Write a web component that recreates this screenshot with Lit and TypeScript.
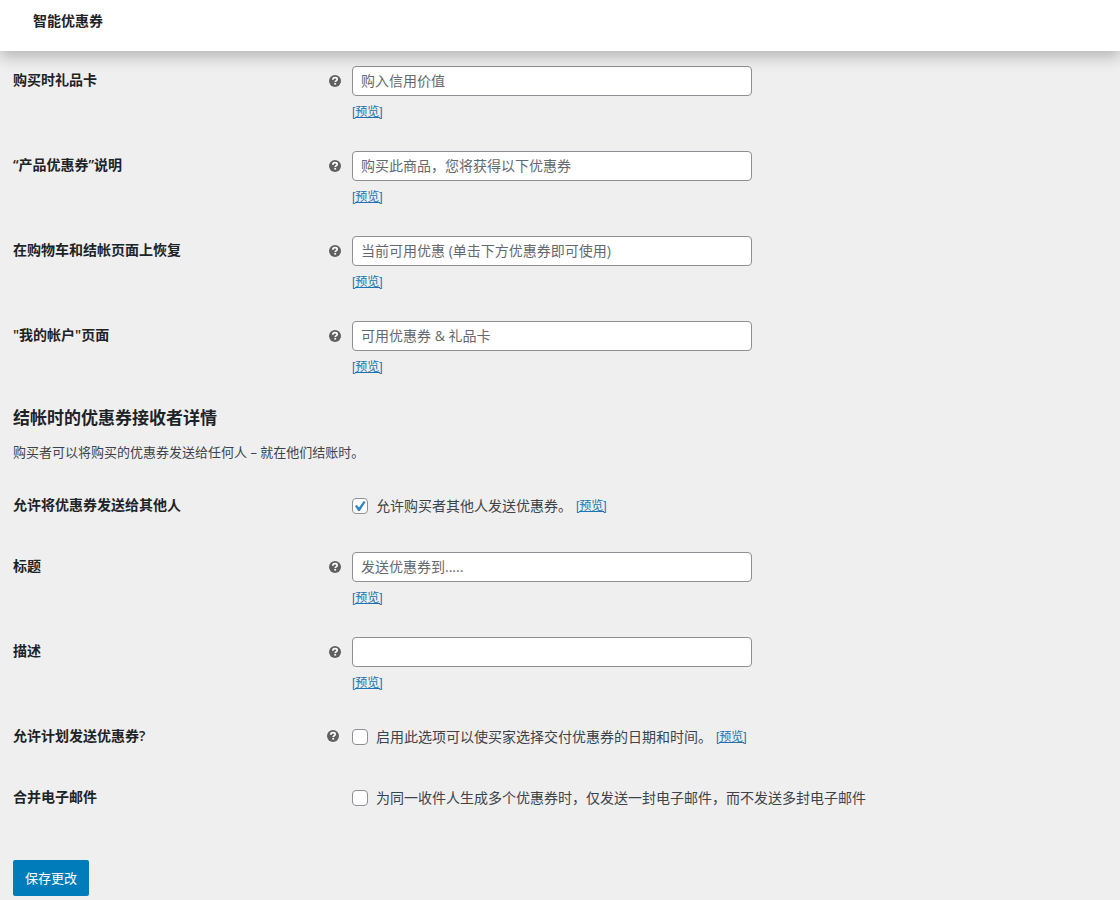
import { LitElement, html, css, nothing } from "lit";
import { customElement } from "lit/decorators.js";
import { classMap } from "lit/directives/class-map.js";

interface Field {
  id: string;
  label: string;
  kind: "text" | "check";
  text: string;
  help?: boolean;
  preview?: boolean;
  checked?: boolean;
}

const LABEL_FIELDS: Field[] = [
  { id: "gift", label: "购买时礼品卡", kind: "text", text: "购入信用价值", help: true, preview: true },
  { id: "product", label: "“产品优惠券”说明", kind: "text", text: "购买此商品，您将获得以下优惠券", help: true, preview: true },
  { id: "cart", label: "在购物车和结帐页面上恢复", kind: "text", text: "当前可用优惠 (单击下方优惠券即可使用)", help: true, preview: true },
  { id: "account", label: "\"我的帐户\"页面", kind: "text", text: "可用优惠券 & 礼品卡", help: true, preview: true },
];

const RECEIVER_FIELDS: Field[] = [
  { id: "allow", label: "允许将优惠券发送给其他人", kind: "check", text: "允许购买者其他人发送优惠券。", preview: true, checked: true },
  { id: "title", label: "标题", kind: "text", text: "发送优惠券到.....", help: true, preview: true },
  { id: "desc", label: "描述", kind: "text", text: "", help: true, preview: true },
  { id: "schedule", label: "允许计划发送优惠券?", kind: "check", text: "启用此选项可以使买家选择交付优惠券的日期和时间。", help: true, preview: true },
  { id: "combine", label: "合并电子邮件", kind: "check", text: "为同一收件人生成多个优惠券时，仅发送一封电子邮件，而不发送多封电子邮件" },
];

@customElement("app-root")
export class AppRoot extends LitElement {
  static styles = css`
    :host {
      display: block;
      min-height: 100vh;
      background: #efefef;
      color: #3c434a;
      font: 14px/20px "Open Sans", "Noto Sans CJK SC", sans-serif;
    }
    * {
      box-sizing: border-box;
    }
    .bar {
      position: relative;
      height: 51px;
      padding: 11px 33px;
      background: #fff;
      box-shadow: 0 6px 14px rgba(0, 0, 0, 0.24);
    }
    .bar-title {
      margin: 0;
      font-size: 14px;
      line-height: 20px;
      font-weight: 600;
      color: #1d2327;
    }
    .page {
      padding: 0 13px 4px;
    }
    .row {
      display: grid;
      grid-template-columns: 314px 1fr;
      min-height: 85px;
      padding-top: 15px;
    }
    .row.check {
      min-height: 61px;
    }
    .head {
      display: flex;
      align-items: center;
      height: 28px;
    }
    .name {
      font-weight: 600;
      color: #1d2327;
    }
    .content {
      display: grid;
      grid-template-columns: 16px minmax(0, 1fr);
      column-gap: 9px;
      align-content: start;
    }
    .row.check .content {
      grid-template-columns: 12px minmax(0, 1fr);
      column-gap: 13px;
    }
    .help {
      display: flex;
      align-items: center;
      justify-content: center;
      height: 30px;
    }
    .row.check .help {
      height: 28px;
    }
    .help svg {
      display: block;
      flex: none;
    }
    .value {
      display: flex;
      flex-direction: column;
      align-items: flex-start;
      gap: 6px;
    }
    .row.check .value {
      flex-direction: row;
      align-items: center;
      gap: 4px;
      height: 30px;
    }
    .text {
      width: 100%;
      max-width: 400px;
      height: 30px;
      padding: 0 8px 2px;
      border: 1px solid #8c8f94;
      border-radius: 4px;
      background: #fff;
      color: #2c3338;
      font: inherit;
    }
    .text::placeholder {
      color: #646970;
      opacity: 1;
    }
    .option {
      display: flex;
      align-items: center;
      gap: 8px;
    }
    .box {
      appearance: none;
      flex: none;
      width: 16px;
      height: 16px;
      margin: 0;
      border: 1px solid #8c8f94;
      border-radius: 4px;
      background: #fff;
    }
    .tick {
      display: grid;
      flex: none;
    }
    .tick > * {
      grid-area: 1 / 1;
    }
    .tick svg {
      pointer-events: none;
    }
    .link {
      font-family: "Liberation Sans", "Noto Sans CJK SC", sans-serif;
      font-size: 12px;
      line-height: 20px;
      color: #2271b1;
    }
    .section {
      margin: 15px 0 12px;
      font-size: 17px;
      line-height: 24px;
      font-weight: 600;
      color: #1d2327;
    }
    .intro {
      margin: 0 0 14px;
      font-size: 13px;
      line-height: 20px;
    }
    .save {
      display: block;
      height: 36px;
      margin-top: 31px;
      padding: 0 12px;
      border: 0;
      border-radius: 2px;
      background: #007cba;
      color: #fff;
      font: inherit;
      font-size: 13px;
    }
  `;

  private helpIcon() {
    return html`<svg width="12" height="12" viewBox="0 0 12 12" role="img" aria-label="?">
      <circle cx="6" cy="6" r="6" fill="#606060" />
      <path d="M3.8 4.7Q3.9 2.7 6 2.7Q8.2 2.7 8.2 4.3Q8.2 5.2 7.2 5.7Q6.2 6.2 6.2 7.1" fill="none" stroke="#fff" stroke-width="1.7" />
      <rect x="5.3" y="7.9" width="1.8" height="1.7" fill="#fff" />
    </svg>`;
  }

  private link() {
    return html`<a class="link" href="#">[预览]</a>`;
  }

  private row(f: Field) {
    const check = f.kind === "check";
    const control = check
      ? html`<label class="option">
          <span class="tick">
            <input class="box" id=${f.id} type="checkbox" ?checked=${f.checked} />
            ${f.checked
              ? html`<svg width="16" height="16" viewBox="0 0 16 16" aria-hidden="true">
                  <path d="M2.9 8L4.9 6.9L7 9.5L11.7 2.9L13.6 4L7.8 12.9H6.2Z" fill="#3582c4" />
                </svg>`
              : nothing}
          </span>
          <span>${f.text}</span>
        </label>`
      : html`<input class="text" id=${f.id} type="text" placeholder=${f.text} />`;
    return html`<div class=${classMap({ row: true, check })}>
      <div class="head"><label class="name" for=${f.id}>${f.label}</label></div>
      <div class="content">
        <span class="help">${f.help ? this.helpIcon() : nothing}</span>
        <div class="value">${control}${f.preview ? this.link() : nothing}</div>
      </div>
    </div>`;
  }

  render() {
    return html`
      <header class="bar"><h1 class="bar-title">智能优惠券</h1></header>
      <form class="page" @submit=${(e: Event) => e.preventDefault()}>
        ${LABEL_FIELDS.map((f) => this.row(f))}
        <h2 class="section">结帐时的优惠券接收者详情</h2>
        <p class="intro">购买者可以将购买的优惠券发送给任何人 – 就在他们结账时。</p>
        ${RECEIVER_FIELDS.map((f) => this.row(f))}
        <button class="save" type="submit">保存更改</button>
      </form>
    `;
  }
}
